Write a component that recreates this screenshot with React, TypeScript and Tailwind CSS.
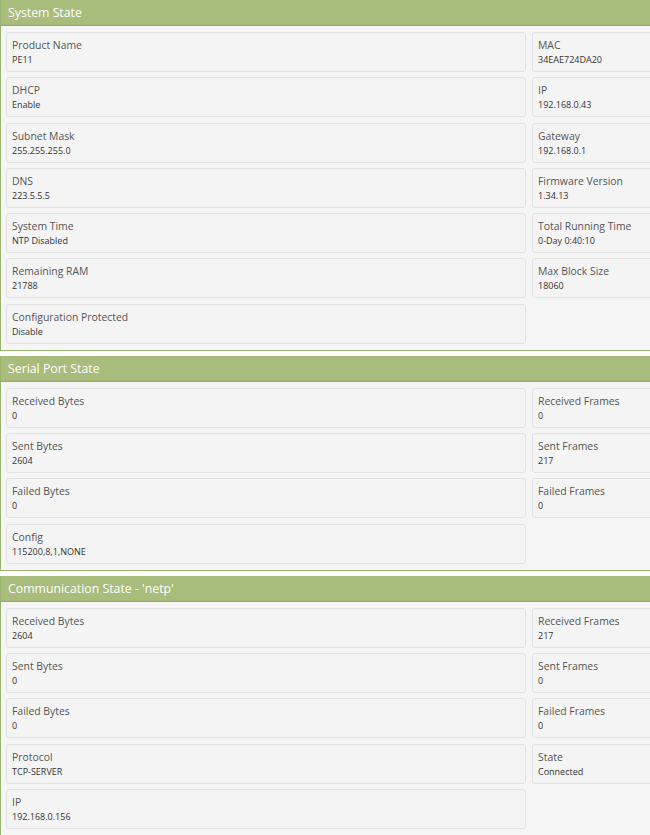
import { Fragment } from "react";

const systemRows: [string, string][][] = [
  [["Product Name", "PE11"], ["MAC", "34EAE724DA20"]],
  [["DHCP", "Enable"], ["IP", "192.168.0.43"]],
  [["Subnet Mask", "255.255.255.0"], ["Gateway", "192.168.0.1"]],
  [["DNS", "223.5.5.5"], ["Firmware Version", "1.34.13"]],
  [["System Time", "NTP Disabled"], ["Total Running Time", "0-Day 0:40:10"]],
  [["Remaining RAM", "21788"], ["Max Block Size", "18060"]],
  [["Configuration Protected", "Disable"]],
];

const serialRows: [string, string][][] = [
  [["Received Bytes", "0"], ["Received Frames", "0"]],
  [["Sent Bytes", "2604"], ["Sent Frames", "217"]],
  [["Failed Bytes", "0"], ["Failed Frames", "0"]],
  [["Config", "115200,8,1,NONE"]],
];

const commRows: [string, string][][] = [
  [["Received Bytes", "2604"], ["Received Frames", "217"]],
  [["Sent Bytes", "0"], ["Sent Frames", "0"]],
  [["Failed Bytes", "0"], ["Failed Frames", "0"]],
  [["Protocol", "TCP-SERVER"], ["State", "Connected"]],
  [["IP", "192.168.0.156"]],
];

function Field({ label, value }: { label: string; value: string }) {
  return (
    <div className="h-[40px] rounded-[3px] border border-[#e1e1e1] bg-[#f4f4f4] px-[5px] pt-[5px]">
      <div className="text-[10.4px] leading-[14px] text-[#555555]">{label}</div>
      <div className="mt-[1px] text-[9px] leading-[13px] text-[#333333]">{value}</div>
    </div>
  );
}

function Panel({ title, rows }: { title: string; rows: [string, string][][] }) {
  return (
    <div className="mb-[5px] w-[700px] border border-t-0 border-[#9cb270] bg-[#f5f5f5]">
      <div className="h-[26px] border-b border-[#93a966] bg-[#a8bc7b] pl-[7px] text-[12.3px] leading-[25px] text-white">
        {title}
      </div>
      <div className="grid grid-cols-[520px_1fr] gap-x-[6px] gap-y-[5.3px] px-[5px] py-[6px]">
        {rows.map((row, i) => (
          <Fragment key={i}>
            <Field label={row[0][0]} value={row[0][1]} />
            {row[1] ? <Field label={row[1][0]} value={row[1][1]} /> : <div />}
          </Fragment>
        ))}
      </div>
    </div>
  );
}

export default function App() {
  return (
    <div className="h-[835px] w-[650px] overflow-hidden bg-white font-['Open_Sans',sans-serif]">
      <Panel title="System State" rows={systemRows} />
      <Panel title="Serial Port State" rows={serialRows} />
      <Panel title="Communication State - 'netp'" rows={commRows} />
    </div>
  );
}
